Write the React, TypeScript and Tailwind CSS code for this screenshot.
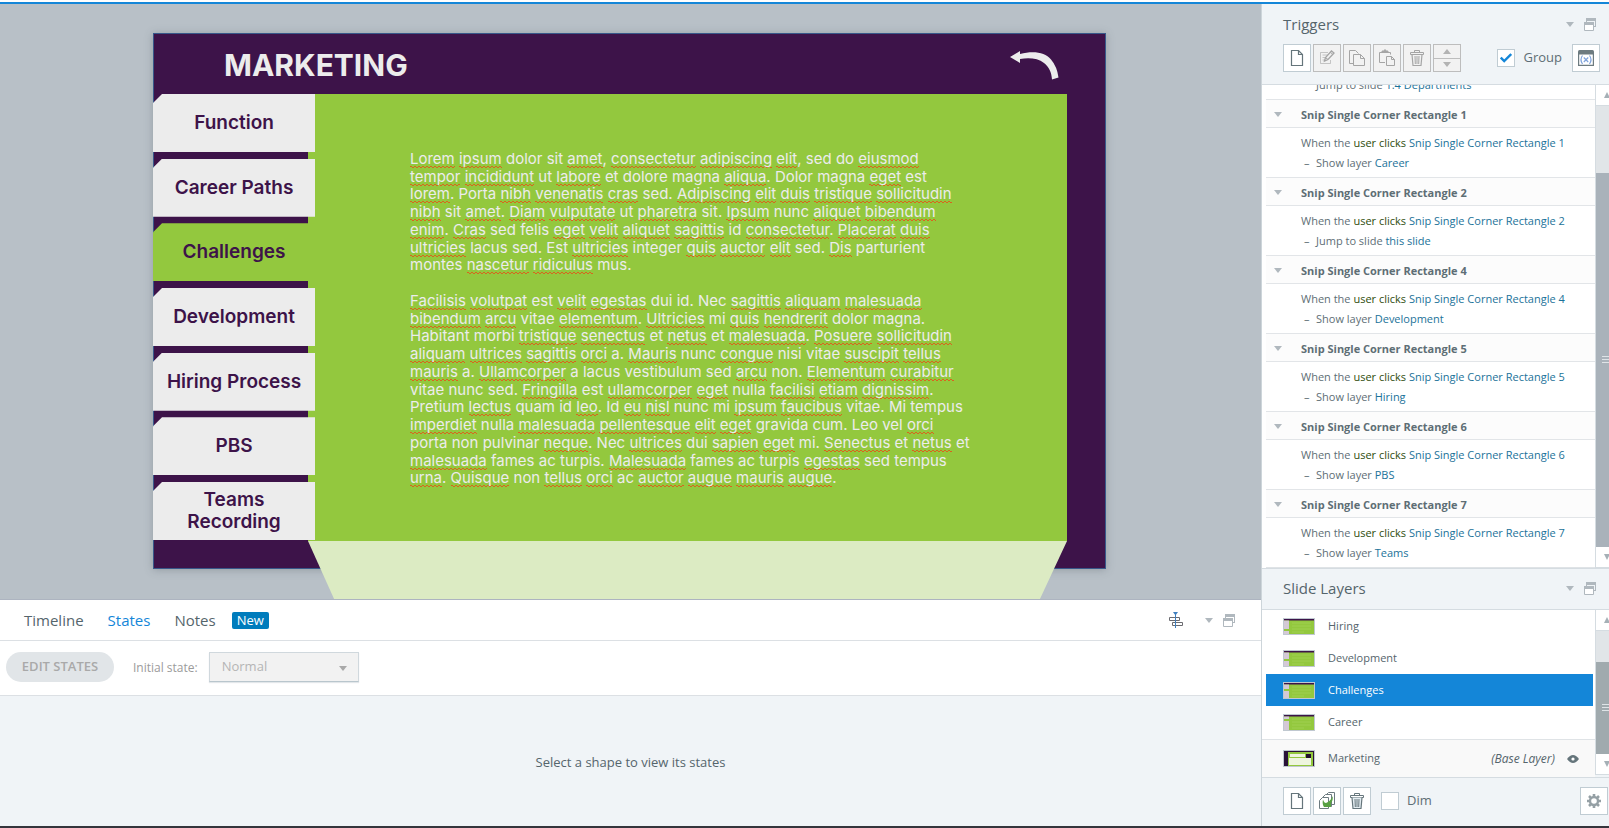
import React from "react";

type IconProps = { className?: string };

const Caret = ({ className = "" }: IconProps) => (
  <svg viewBox="0 0 8 5" className={`h-[5px] w-2 shrink-0 ${className}`} fill="currentColor" aria-hidden="true">
    <path d="M0 0h8L4 5z" />
  </svg>
);

const CaretUp = ({ className = "" }: IconProps) => (
  <svg viewBox="0 0 8 5" className={`h-[5px] w-2 shrink-0 ${className}`} fill="currentColor" aria-hidden="true">
    <path d="M0 5h8L4 0z" />
  </svg>
);

const ScrollCaret = ({ up }: { up?: boolean }) => (
  <svg viewBox="0 0 6 6" className="size-1.5 shrink-0" fill="currentColor" aria-hidden="true">
    <path d={up ? "M0 6h6L3 0z" : "M0 0h6L3 6z"} />
  </svg>
);

const WindowsIcon = () => (
  <svg viewBox="0 0 12 13" className="h-[13px] w-3 shrink-0" fill="none" aria-hidden="true">
    <path d="M2 0h10v3H2zM11 3h1v6h-2V8h1zM2 3h1v1H2z" fill="#b0b8be" />
    <path d="M0 4h10v3H0z" fill="#b0b8be" />
    <path d="M.5 7v5.500h9V7" stroke="#b0b8be" fill="#fff" />
  </svg>
);

const PageIcon = () => (
  <svg viewBox="0 0 16 20" className="h-5 w-4" fill="none" stroke="currentColor" aria-hidden="true">
    <path d="M2.500 2.500h7l4 4v11h-11z" strokeWidth="1.200" />
    <path d="M9.500 2.500v4h4" strokeWidth="1.200" />
  </svg>
);

const EditIcon = () => (
  <svg viewBox="0 0 18 20" className="h-5 w-[18px]" fill="none" stroke="currentColor" aria-hidden="true">
    <path d="M10 4.500H2.500v11h10V12" opacity=".6" />
    <path d="M4.500 7h5M4.500 9.500h4M4.500 12h3" opacity=".6" />
    <path d="m6.500 13 1-3.500 6-6.500 2.500 2-6 6.500z" fill="#f2f2f2" strokeWidth="1.300" />
    <path d="m8 10 2 1.500M12.500 4.500l2 1.500" />
  </svg>
);

const CopyIcon = () => (
  <svg viewBox="0 0 18 20" className="h-5 w-[18px]" fill="none" stroke="currentColor" aria-hidden="true">
    <path d="M5 15.500H1.500v-13h6l3 3" />
    <path d="M5.500 6.500h7l4 4v7h-11z" fill="#f2f2f2" />
    <path d="M12.500 6.500v4h4" />
  </svg>
);

const PasteIcon = () => (
  <svg viewBox="0 0 18 20" className="h-5 w-[18px]" fill="none" stroke="currentColor" aria-hidden="true">
    <path d="M7 14.500H1.500v-10h11v2" />
    <path d="M4 4.500h6V3H8L7 1.500 6 3H4z" fill="currentColor" />
    <path d="M8.500 8.500h5l3 3v6h-8z" fill="#f2f2f2" />
    <path d="M13.500 8.500v3h3" />
  </svg>
);

const TrashIcon = ({ fill = "none" }: { fill?: string }) => (
  <svg viewBox="0 0 16 20" className="h-5 w-4" fill="none" stroke="currentColor" aria-hidden="true">
    <path d="M5.500 4V2.500h5V4M1.500 4.500h13v2h-13z" />
    <path d="m3 6.500 1 11h8l1-11" fill={fill} strokeWidth="1.200" />
    <path d="m6 8 .3 8M8 8v8M10 8l-.3 8" />
  </svg>
);

const VariablesIcon = () => (
  <svg viewBox="0 0 16 16" className="size-4" fill="none" aria-hidden="true">
    <path d="M.6 2.500v12.900h14.800V2.500" stroke="#6d7b80" strokeWidth="1.200" fill="#fff" />
    <path d="M0 1.500Q0 0 1.500 0h13Q16 0 16 1.500V4.500H0z" fill="#6d7b80" />
    <path d="M4.500 5.500q-3 4 0 8.500M11.500 5.500q3 4 0 8.500M5.800 7.500l4.400 4.500M10.200 7.500 5.800 12" stroke="#7fa3dc" strokeWidth="1.200" />
  </svg>
);

const DuplicateIcon = () => (
  <svg viewBox="0 0 18 18" className="size-[18px]" fill="none" stroke="#6d7b80" aria-hidden="true">
    <path d="M7.500 12.500v-9l3-3h6v12z" fill="#fff" />
    <path d="M4.500 14.500v-9l3-3h6v12z" fill="#fff" />
    <path d="M1.500 16.500v-8l3-3h6v11z" fill="#fff" />
    <path d="M5 7.500q1 3.500 3 3.500Q12 9.500 15 4q0 5-2 7.500V15H6q-2-3-1-7.500z" fill="#58a042" stroke="none" />
  </svg>
);

const AlignIcon = () => (
  <svg viewBox="0 0 14 16" className="h-4 w-3.5" fill="none" aria-hidden="true">
    <path d="M.5 5.500h10v3H.5zM3.500 10.500h10v3h-10z" stroke="#6b6b70" />
    <path d="M4 0h5L6.500 3.500z" fill="#3f7fbf" />
    <path d="M6.500 0v16" stroke="#3f7fbf" />
  </svg>
);

const EyeIcon = () => (
  <svg viewBox="0 0 12 8" className="h-2 w-3" aria-hidden="true">
    <path d="M0 4q6-8 12 0-6 8-12 0z" fill="#65757b" />
    <circle cx="6" cy="4" r="1.600" fill="#fff" />
  </svg>
);

const GearIcon = () => (
  <svg viewBox="-8 -8 16 16" className="size-4" fill="none" stroke="#95a0a5" aria-hidden="true">
    <circle r="4" strokeWidth="2.400" />
    <path strokeWidth="2.600" d="M0-4.500V-7M0 4.500V7M-4.500 0H-7M4.500 0H7M3.200-3.200 5-5M-3.200 3.200-5 5M3.200 3.200 5 5M-3.200-3.200-5-5" />
  </svg>
);

const ReturnArrow = () => (
  <svg viewBox="0 0 50 30" className="h-[30px] w-[50px]" fill="#ececec" aria-hidden="true">
    <path d="M0 7 10 1v3C24 .5 35 2.500 41 9.500q6 7 7.500 18l-6.500 2C41.500 22 39 17 34 13 28 8.500 20 7.500 10 9v4z" />
  </svg>
);

type ToolProps = { label: string; disabled?: boolean; children: React.ReactNode };

const ToolButton = ({ label, disabled, children }: ToolProps) => (
  <button
    type="button"
    aria-label={label}
    disabled={disabled}
    className={`flex size-7 shrink-0 items-center justify-center border ${
      disabled ? "border-[#bdbdbd] bg-[#f2f2f2] text-[#a5a5a5]" : "border-[#c0ccd3] bg-white text-[#65757b]"
    }`}
  >
    {children}
  </button>
);

const tabs = ["Function", "Career Paths", "Challenges", "Development", "Hiring Process", "PBS", "Teams Recording"];

/* Underscores mark the words flagged by the spelling checker. An empty string is a blank line. */
const bodyLines = [
  "_Lorem _ipsum dolor sit _amet, _consectetur _adipiscing _elit, sed do _eiusmod",
  "_tempor _incididunt ut _labore et dolore magna _aliqua. Dolor magna _eget est",
  "_lorem. Porta _nibh _venenatis _cras sed. _Adipiscing _elit _duis _tristique _sollicitudin",
  "_nibh sit _amet. _Diam _vulputate ut _pharetra sit. _Ipsum nunc _aliquet _bibendum",
  "_enim. _Cras sed felis _eget _velit _aliquet _sagittis id _consectetur. _Placerat _duis",
  "_ultricies lacus sed. Est _ultricies integer _quis _auctor _elit sed. _Dis parturient",
  "montes _nascetur _ridiculus mus.",
  "",
  "_Facilisis _volutpat est _velit _egestas dui id. Nec _sagittis _aliquam _malesuada",
  "_bibendum _arcu vitae _elementum. _Ultricies mi _quis _hendrerit dolor magna.",
  "Habitant morbi _tristique _senectus et _netus et _malesuada. _Posuere _sollicitudin",
  "_aliquam _ultrices _sagittis _orci a. _Mauris nunc _congue nisi vitae _suscipit _tellus",
  "_mauris a. _Ullamcorper a lacus vestibulum sed _arcu non. _Elementum _curabitur",
  "vitae nunc sed. _Fringilla est _ullamcorper _eget nulla _facilisi _etiam _dignissim.",
  "Pretium _lectus quam id _leo. Id _eu _nisl nunc mi _ipsum _faucibus vitae. Mi tempus",
  "_imperdiet nulla _malesuada _pellentesque _elit _eget gravida cum. Leo vel _orci",
  "porta non pulvinar _neque. Nec _ultrices dui _sapien _eget mi. _Senectus et _netus et",
  "_malesuada fames ac turpis. _Malesuada fames ac turpis _egestas sed tempus",
  "_urna. _Quisque non _tellus _orci ac _auctor _augue _mauris _augue.",
];

/* The squiggle is a 4x2 tile repeated along the foot of the word. */
const squiggle =
  "bg-[linear-gradient(45deg,transparent_35%,#d9641e_35%,#d9641e_65%,transparent_65%),linear-gradient(-45deg,transparent_35%,#d9641e_35%,#d9641e_65%,transparent_65%)] bg-[length:4px_2px,4px_2px] bg-[position:0_100%,2px_100%] bg-repeat-x";

const BodyLine = ({ text }: { text: string }) => (
  <p className="whitespace-pre">
    {text.split(" ").map((word, i) => {
      const lead = i > 0 ? " " : "";
      if (!word.startsWith("_")) return lead + word;
      const bare = word.slice(1).replace(/[.,]$/, "");
      const tail = word.slice(1 + bare.length);
      return (
        <React.Fragment key={i}>
          {lead}
          <span className={squiggle}>{bare}</span>
          {tail}
        </React.Fragment>
      );
    })}
  </p>
);

const Slide = () => (
  <div className="relative flex h-[536px] w-[953px] shrink-0 flex-col border border-[#38588a] bg-[#3d1349] font-['Inter',sans-serif] shadow-[0_1px_8px_rgba(80,90,100,0.35)]">
    <header className="flex h-[60px] shrink-0 items-center justify-between pt-0.5 pr-[45px] pl-[70px]">
      <h1 className="text-[30px] leading-none font-bold text-[#ececec]">MARKETING</h1>
      <button type="button" aria-label="Back">
        <ReturnArrow />
      </button>
    </header>
    <div className="flex h-[447px] shrink-0 pr-[38px]">
      <nav className="z-10 -mr-[7px] -ml-px flex h-[446px] w-[162px] shrink-0 flex-col justify-between">
        {tabs.map((tab) => (
          <button
            key={tab}
            type="button"
            className={`flex h-[58px] items-center justify-center px-6 text-[19px] leading-[22px] font-semibold text-[#3d1349] [clip-path:polygon(9px_0,100%_0,100%_100%,0_100%,0_9px)] ${
              tab === "Challenges" ? "bg-[#93c83e]" : "bg-[#ececec]"
            }`}
          >
            <span className={tab === "Teams Recording" ? "" : "whitespace-nowrap"}>{tab}</span>
          </button>
        ))}
      </nav>
      <div className="flex-1 bg-[#93c83e] pt-14 pl-[102px]">
        <div className="grid h-[337px] auto-rows-fr text-[15px] leading-[17px] text-[#ececec]">
          {bodyLines.map((line, i) => (
            <BodyLine key={i} text={line} />
          ))}
        </div>
      </div>
    </div>
    <div className="absolute top-[507px] left-[154px] h-[60px] w-[759px] bg-[#dcebc3] [clip-path:polygon(0_0,100%_0,calc(100%-28px)_100%,27px_100%)]" />
  </div>
);

const PanelControls = () => (
  <div className="flex items-center gap-2.5">
    <button type="button" aria-label="Panel options" className="text-[#b0b8be]">
      <Caret />
    </button>
    <button type="button" aria-label="Undock panel">
      <WindowsIcon />
    </button>
  </div>
);

const BottomPanel = () => (
  <section className="flex shrink-0 flex-col border-t border-[#adb4c0] bg-white">
    <div className="flex h-[41px] items-center border-b border-[#dce0e4] pr-[26px] pl-6">
      <nav className="flex items-center gap-6 text-[15px] text-[#55656c]">
        <button type="button">Timeline</button>
        <button type="button" className="text-[#1486d8]">States</button>
        <button type="button">Notes</button>
      </nav>
      <span className="ml-4 rounded-xs bg-[#007cbc] px-[5px] text-[13px] leading-[17px] text-white">New</span>
      <div className="ml-auto flex items-center gap-[22px]">
        <button type="button" aria-label="Align timeline">
          <AlignIcon />
        </button>
        <PanelControls />
      </div>
    </div>
    <div className="flex h-[55px] items-center border-b border-[#dce0e4] pb-0.5 pl-1.5 text-[12px] text-[#9b9b9b]">
      <button type="button" disabled className="h-[30px] w-[108px] rounded-full bg-[#e1e5e8] text-[13px] font-semibold text-[#a9a9a9]">
        EDIT STATES
      </button>
      <label htmlFor="initial-state" className="ml-[19px] pt-0.5">Initial state:</label>
      <div className="relative ml-[11px]">
        <select
          id="initial-state"
          disabled
          className="block h-[30px] w-[150px] appearance-none border border-[#d0d8dd] border-b-[#b9c6cd] bg-[#f2f2f2] pl-3 text-[13px] text-[#b5b5b5] opacity-100 shadow-[0_1px_1px_#e3e7ea]"
        >
          <option>Normal</option>
        </select>
        <Caret className="pointer-events-none absolute top-[14px] right-3 text-[#a9a9a9]" />
      </div>
    </div>
    <div className="flex h-[130px] items-center justify-center bg-[#f0f4f7] pt-1 text-[13px] text-[#55656c]">
      Select a shape to view its states
    </div>
  </section>
);

type CheckProps = { id: string; label: string; checked: boolean };

const Check = ({ id, label, checked }: CheckProps) => (
  <div className="flex items-center text-[13px] text-[#5e6e75]">
    <div className="relative size-[18px]">
      <input
        id={id}
        type="checkbox"
        defaultChecked={checked}
        className="peer block size-[18px] appearance-none border border-[#c0ccd3] bg-white"
      />
      <svg
        viewBox="0 0 12 10"
        className="pointer-events-none absolute top-1 left-[3px] hidden h-2.5 w-3 peer-checked:block"
        fill="none"
        stroke="#1486d8"
        strokeWidth="2.400"
        aria-hidden="true"
      >
        <path d="m.8 4.500 3.400 3.500 7-7" />
      </svg>
    </div>
    <label htmlFor={id} className="pl-2">{label}</label>
  </div>
);

const Scrollbar = ({ thumb }: { thumb: string }) => (
  <div className="flex w-3.5 shrink-0 flex-col overflow-hidden border-l border-[#d5dce1] bg-[#e1e5e8]">
    <button type="button" aria-label="Scroll up" className="flex h-[21px] w-[21px] items-center justify-center border-b border-[#d5dce1] bg-white text-[#a5b0b6]">
      <ScrollCaret up />
    </button>
    <div className="flex flex-1 flex-col justify-end">
      <div className={`flex w-[21px] shrink-0 items-center ${thumb}`}>
        <svg viewBox="0 0 8 8" className="ml-1.5 size-2" stroke="#dfe4e7" aria-hidden="true">
          <path d="M0 .5h8M0 3.500h8M0 6.500h8" />
        </svg>
      </div>
    </div>
    <button type="button" aria-label="Scroll down" className="flex h-[21px] w-[21px] items-center justify-center border-b border-[#d5dce1] bg-white text-[#a5b0b6]">
      <ScrollCaret />
    </button>
  </div>
);

const triggers = [
  { n: 1, verb: "Show layer", target: "Career" },
  { n: 2, verb: "Jump to slide", target: "this slide" },
  { n: 4, verb: "Show layer", target: "Development" },
  { n: 5, verb: "Show layer", target: "Hiring" },
  { n: 6, verb: "Show layer", target: "PBS" },
  { n: 7, verb: "Show layer", target: "Teams" },
];

const Action = ({ verb, target }: { verb: string; target: string }) => (
  <p className="flex pl-[3px]">
    <span className="w-3">–</span>
    <span>
      {verb} <a href="#action" className="text-[#1b7299]">{target}</a>
    </span>
  </p>
);

const TriggersPanel = () => (
  <section className="flex min-h-0 flex-1 flex-col">
    <header className="flex h-[81px] shrink-0 flex-col border-b border-[#d5dce1] pt-[7px] pl-[21px]">
      <div className="flex h-[26px] items-center justify-between pr-[13px]">
        <h2 className="text-[15px] text-[#55656c]">Triggers</h2>
        <PanelControls />
      </div>
      <div className="flex gap-0.5 pt-[7px] pr-[9px]">
        <ToolButton label="New trigger"><PageIcon /></ToolButton>
        <ToolButton label="Edit trigger" disabled><EditIcon /></ToolButton>
        <ToolButton label="Copy trigger" disabled><CopyIcon /></ToolButton>
        <ToolButton label="Paste trigger" disabled><PasteIcon /></ToolButton>
        <ToolButton label="Delete trigger" disabled><TrashIcon /></ToolButton>
        <div className="flex h-7 w-7 flex-col border border-[#bdbdbd] bg-[#f2f2f2] text-[#b3b3b3]">
          <button type="button" disabled aria-label="Move up" className="flex flex-1 items-center justify-center border-b border-[#bdbdbd]">
            <CaretUp />
          </button>
          <button type="button" disabled aria-label="Move down" className="flex flex-1 items-center justify-center">
            <Caret />
          </button>
        </div>
        <div className="ml-auto flex items-center gap-2.5">
          <Check id="group" label="Group" checked />
          <ToolButton label="Manage variables"><VariablesIcon /></ToolButton>
        </div>
      </div>
    </header>
    <div className="flex min-h-0 flex-1 bg-white pl-1">
      <div className="flex min-w-0 flex-1 flex-col justify-end overflow-hidden border-b border-[#dfe3e6] text-[11px] leading-5 text-[#5e6e75]">
        <div className="pb-1 pl-[35px]">
          <p className="flex pl-[3px]">
            <span className="w-3" />
            <span>
              Jump to slide <a href="#action" className="text-[#1b7299]">1.4 Departments</a>
            </span>
          </p>
        </div>
        {triggers.map((t) => (
          <div key={t.n} className="shrink-0">
            <h3 className="flex h-[29px] items-center gap-[19px] border-y border-[#e2e5e8] bg-[#fcfcfc] pt-0.5 pl-2 font-bold whitespace-nowrap">
              <Caret className="text-[#b0b8be]" />
              Snip Single Corner Rectangle {t.n}
            </h3>
            <div className="h-[49px] pt-[5px] pl-[35px] whitespace-nowrap">
              <p>
                When the <span className="text-[#2f4d0d]">user clicks</span>{" "}
                <a href="#object" className="text-[#1b7299]">Snip Single Corner Rectangle {t.n}</a>
              </p>
              <Action verb={t.verb} target={t.target} />
            </div>
          </div>
        ))}
      </div>
      <Scrollbar thumb="h-[374px] bg-[#a9b2ba]" />
    </div>
  </section>
);

/* Miniature of a layer: the offset places the highlighted tab. */
const LayerThumb = ({ tabY }: { tabY: number }) => (
  <svg viewBox="0 0 32 17" className="h-[17px] w-8 shrink-0" aria-hidden="true">
    <rect x=".5" y=".5" width="31" height="16" fill="#93c83e" stroke="#c0c8d0" />
    <path d="M1 1h30v1.500H1z" fill="#3d1349" />
    <path d="M1 2.500h5V16H1z" fill="#d4c9d6" />
    <path d={`M1 ${tabY}h5v2H1z`} fill="#93c83e" />
    <path d="M9 5h19M9 8h19M9 11h19M9 14h12" stroke="#9fcf50" />
  </svg>
);

const BaseThumb = () => (
  <svg viewBox="0 0 32 17" className="h-[17px] w-8 shrink-0" aria-hidden="true">
    <rect x=".5" y=".5" width="31" height="16" fill="#2a1238" stroke="#c0c8d0" />
    <path d="M5 2h25v14H5z" fill="#93c83e" />
    <path d="M7 4h15v3H7zM6 8h22v7H6z" fill="#eef5df" />
    <path d="M23 4h5v4h-5z" fill="#21102c" />
  </svg>
);

const layers = [
  { name: "Hiring", tabY: 11 },
  { name: "Development", tabY: 9 },
  { name: "Challenges", tabY: 7 },
  { name: "Career", tabY: 5 },
];

const LayersPanel = () => (
  <section className="flex shrink-0 flex-col">
    <header className="flex h-[42px] items-center justify-between border-y border-[#d5dce1] pr-[13px] pb-px pl-[21px]">
      <h2 className="text-[15px] text-[#55656c]">Slide Layers</h2>
      <PanelControls />
    </header>
    <div className="flex bg-white text-[11px] text-[#55656c]">
      <div className="min-w-0 flex-1">
        <ul className="pr-0.5 pb-px pl-1">
          {layers.map((l) => (
            <li key={l.name}>
              <button
                type="button"
                className={`flex h-8 w-full items-center gap-[13px] pl-[17px] ${
                  l.name === "Challenges" ? "bg-[#1486d8] text-white" : ""
                }`}
              >
                <LayerThumb tabY={l.tabY} />
                {l.name}
              </button>
            </li>
          ))}
        </ul>
        <div className="flex h-[38px] items-center border-t border-[#dfe3e6] bg-[#f9f9f9] pr-4 pl-[21px]">
          <BaseThumb />
          <span className="pl-[13px]">Marketing</span>
          <span className="ml-auto pr-3 text-[12px] italic">(Base Layer)</span>
          <button type="button" aria-label="Toggle layer visibility">
            <EyeIcon />
          </button>
        </div>
      </div>
      <div className="flex bg-[#f0f4f7] pb-0.5">
        <Scrollbar thumb="h-[92px] bg-[#a0aaae]" />
      </div>
    </div>
    <footer className="flex h-[49px] items-center gap-0.5 border-t border-[#d5dce1] pr-px pb-0.5 pl-[21px]">
      <ToolButton label="New layer"><PageIcon /></ToolButton>
      <ToolButton label="Duplicate layer"><DuplicateIcon /></ToolButton>
      <ToolButton label="Delete layer"><TrashIcon fill="#e4edf2" /></ToolButton>
      <div className="pl-2">
        <Check id="dim" label="Dim" checked={false} />
      </div>
      <div className="ml-auto">
        <ToolButton label="Layer properties"><GearIcon /></ToolButton>
      </div>
    </footer>
  </section>
);

export default function App() {
  return (
    <div className="flex h-screen flex-col border-b-2 border-[#35353c] bg-white pt-0.5 font-['Open_Sans','Noto_Sans',sans-serif]">
      <div className="flex min-h-0 flex-1 border-t-2 border-[#1486d8]">
        <main className="flex min-w-0 flex-1 flex-col">
          <div className="flex min-h-0 flex-1 items-start justify-center overflow-hidden bg-[#b8c0c7] pt-[29px] pr-0.5">
            <Slide />
          </div>
          <BottomPanel />
        </main>
        <aside className="flex w-[348px] shrink-0 flex-col border-l border-[#cdd5da] bg-[#f0f4f7]">
          <TriggersPanel />
          <LayersPanel />
        </aside>
      </div>
    </div>
  );
}
